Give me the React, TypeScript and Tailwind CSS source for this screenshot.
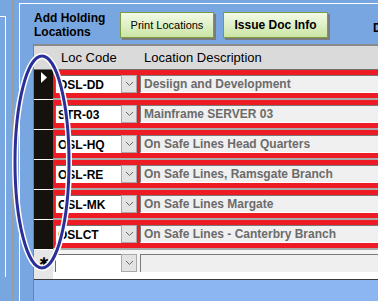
import React from 'react'

// --- data ---

interface Loc {
  code: string
  desc: string
}

const LOCS: Loc[] = [
  { code: 'OSL-DD', desc: 'Desiign and Development' },
  { code: 'STR-03', desc: 'Mainframe SERVER 03' },
  { code: 'OSL-HQ', desc: 'On Safe Lines Head Quarters' },
  { code: 'OSL-RE', desc: 'On Safe Lines, Ramsgate Branch' },
  { code: 'OSL-MK', desc: 'On Safe Lines Margate' },
  { code: 'OSLCT', desc: 'On Safe Lines - Canterbry Branch' },
]

const FONT = "font-['Liberation_Sans',Arial,sans-serif]"

function Chevron() {
  return (
    <svg width="9" height="6" viewBox="0 0 9 6" className="block">
      <path d="M1 1 L4.5 4.5 L8 1" fill="none" stroke="#6a6a6a" strokeWidth="1" />
    </svg>
  )
}

function DropBtn() {
  return (
    <div className="w-[16px] h-full bg-[#e3e3e3] border border-[#a8a8a8] flex items-center justify-center">
      <Chevron />
    </div>
  )
}

function Row({ loc, first }: { loc: Loc; first: boolean }) {
  return (
    <div className="flex h-[30px]">
      <div className="w-[19px] bg-[#15110d] border-b border-white flex items-start justify-center pt-[2px]">
        {first && (
          <svg width="7" height="11" viewBox="0 0 7 11" className="ml-[2px]">
            <path d="M0 0 L6 5.5 L0 11 Z" fill="#fff" />
          </svg>
        )}
      </div>
      <div className="flex-1 flex flex-col">
        <div className="h-[5px] bg-[#ed1c24]" />
        <div className="h-[18px] flex bg-[#ed1c24]">
          <div className="ml-[2px] w-[66px] h-full bg-white border-t border-l border-[#6e6e6e] flex items-center pl-[2px]">
            <span className="text-[12px] font-bold text-black leading-none">{loc.code}</span>
          </div>
          <DropBtn />
          <div className="ml-[3px] flex-1 h-full bg-[#f0f0f0] border-t border-l border-[#7a7a7a] border-b border-b-white flex items-center pl-[3px]">
            <span className="text-[12px] font-bold text-[#6b6b6b] leading-none whitespace-nowrap">{loc.desc}</span>
          </div>
        </div>
        <div className="h-[5px] bg-[#ed1c24]" />
        <div className="h-[2px] bg-[#a9a9a9]" />
      </div>
    </div>
  )
}

export default function App() {
  return (
    <div className={`${FONT} relative w-[378px] h-[301px] overflow-hidden bg-[#78a6e0] flex`}>
      {/* left frame lines */}
      <div className="flex h-full">
        <div className="w-[5px] pt-[16px]">
          <div className="h-px bg-white" />
        </div>
        <div className="w-px mt-[16px] mb-[24px] bg-white" />
        <div className="w-[6px]" />
        <div className="w-[2px] bg-[#9c9c9c]" />
        <div className="w-[5px]" />
      </div>

      {/* main panel */}
      <div className="flex-1 mt-[3px] border-t border-l border-white flex flex-col">
        <div className="h-[40px] flex items-start">
          <div className="w-[100px] pl-[14px] pt-[7px] text-[12px] font-bold leading-[14px] text-black">
            Add Holding
            <br />
            Locations
          </div>
          <button className="mt-[8px] w-[94px] h-[26px] border border-[#7d9a45] bg-gradient-to-b from-[#f3fae6] to-[#cbe5a4] shadow-[2px_2px_0_#7b7b7b] text-[11px] text-black">
            Print Locations
          </button>
          <button className="ml-[9px] mt-[8px] w-[105px] h-[26px] border border-[#7d9a45] bg-gradient-to-b from-[#f3fae6] to-[#cbe5a4] shadow-[2px_2px_0_#7b7b7b] text-[12px] font-bold text-black">
            Issue Doc Info
          </button>
          <div className="ml-[45px] mt-[15px] text-[12px] font-bold text-black">D</div>
        </div>

        {/* datasheet */}
        <div className="ml-[13px] flex-1 flex flex-col bg-[#8cb6f2] border-l border-[#808080]">
          <div className="h-[26px] flex bg-[#dadada] border-t-2 border-[#8a8a8a] border-b border-b-[#6e6e6e] text-[13px] text-black items-center">
            <div className="w-[19px]" />
            <div className="w-[91px] pl-[8px]">Loc Code</div>
            <div>Location Description</div>
          </div>
          {LOCS.map((l, i) => (
            <Row key={l.code} loc={l} first={i === 0} />
          ))}
          {/* new record row */}
          <div className="flex h-[30px] border-b border-[#3a3a3a]">
            <div className="w-[19px] bg-[#e6e6e6] flex items-start justify-center pt-[6px] text-[12px] leading-none text-black">
              ✱
            </div>
            <div className="flex-1 flex flex-col bg-[#f4f4f4]">
              <div className="h-[4px]" />
              <div className="h-[18px] flex">
                <div className="ml-[2px] w-[66px] h-full bg-white border-t border-l border-[#6e6e6e]" />
                <DropBtn />
                <div className="ml-[3px] flex-1 h-full bg-[#efefef] border-t border-l border-[#7a7a7a]" />
              </div>
              <div className="flex-1 bg-white" />
            </div>
          </div>
        </div>
      </div>

      {/* annotation oval */}
      <svg className="absolute left-0 top-0 pointer-events-none" width="378" height="301">
        <ellipse cx="42" cy="162" rx="27" ry="106" fill="none" stroke="#fff" strokeWidth="6" />
        <ellipse cx="42" cy="162" rx="27" ry="106" fill="none" stroke="#2b2f97" strokeWidth="3" />
      </svg>
    </div>
  )
}
